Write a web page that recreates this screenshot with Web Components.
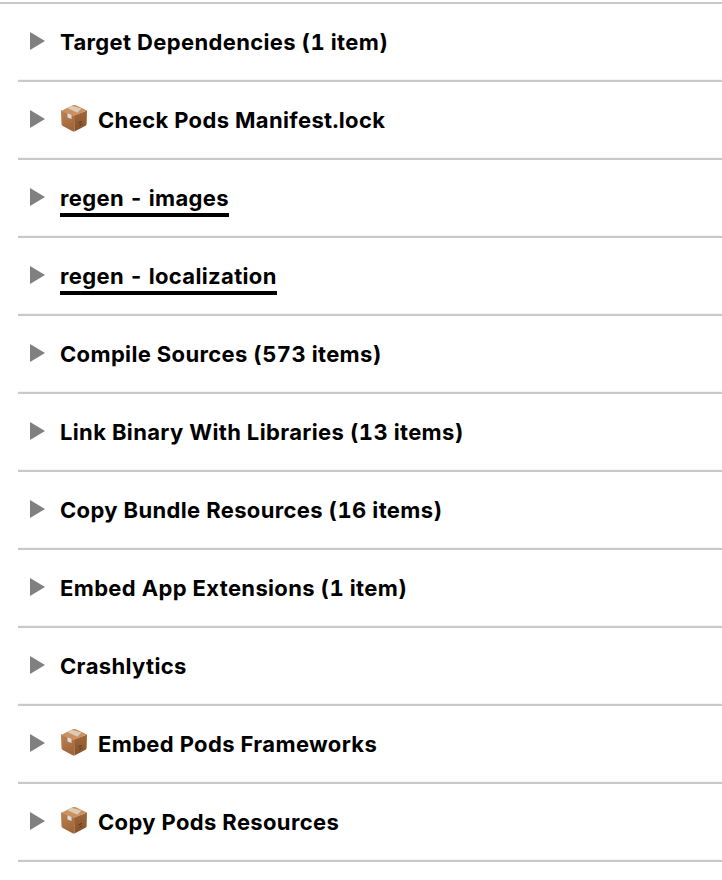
<!DOCTYPE html>
<html>
<head>
<meta charset="utf-8">
<title>Build Phases</title>
<style>
	html, body { margin: 0; padding: 0; background: #fff; }
	body { padding-top: 2px; font-family: Inter, "Liberation Sans", sans-serif; }
</style>
</head>
<body>
<phase-list>
	<build-phase>Target Dependencies (1 item)</build-phase>
	<build-phase pod>Check Pods Manifest.lock</build-phase>
	<build-phase marked>regen - images</build-phase>
	<build-phase marked>regen - localization</build-phase>
	<build-phase>Compile Sources (573 items)</build-phase>
	<build-phase>Link Binary With Libraries (13 items)</build-phase>
	<build-phase>Copy Bundle Resources (16 items)</build-phase>
	<build-phase>Embed App Extensions (1 item)</build-phase>
	<build-phase>Crashlytics</build-phase>
	<build-phase pod>Embed Pods Frameworks</build-phase>
	<build-phase pod>Copy Pods Resources</build-phase>
</phase-list>
<script>
(function() {
	let listTemplate = document.createElement("template");
	listTemplate.innerHTML = `
		<style>
		:host {
			display: block;
			border-top: 2px solid #c9c9c9;
			padding-left: 18px;
		}
		</style>
		<slot></slot>
	`;

	class PhaseList extends HTMLElement {
		constructor() {
			super();
			this.attachShadow({mode: "open"}).appendChild(listTemplate.content.cloneNode(true));
		}
	}

	let boxTemplate = document.createElement("template");
	boxTemplate.innerHTML = `
		<style>
		:host { display: block; width: 28px; height: 28px; }
		svg { display: block; }
		</style>
		<svg width="28" height="28" viewBox="0 0 28 28">
			<defs>
				<linearGradient id="left" x1="0" y1="0" x2="0.3" y2="1">
					<stop offset="0" stop-color="#bd8350"/>
					<stop offset="1" stop-color="#a0663a"/>
				</linearGradient>
				<linearGradient id="right" x1="0" y1="0" x2="0" y2="1">
					<stop offset="0" stop-color="#a2683a"/>
					<stop offset="1" stop-color="#84502a"/>
				</linearGradient>
			</defs>
			<path d="M1 7 Q0.800 6 1.600 6.600 L14 11.500 L14.500 27.500 Q13.500 27.700 12.500 27.200 L2.800 22 Q1.500 21.300 1.500 20 Z" fill="url(#left)"/>
			<path d="M14 11.500 L27 6.500 L26.600 20 Q26.500 21.200 25.500 21.800 L14.500 27.500 Z" fill="url(#right)"/>
			<path d="M1 7 L12.500 1.300 Q14 0.700 15.500 1 L27 6.500 L14 11.800 Z" fill="#c9915f"/>
			<path d="M7 4 L11.500 1.800 L21.500 4.600 L17.500 8.800 Z" fill="#dccab2"/>
			<path d="M7.500 9.300 L11.500 11 L11.500 15 L7.500 13.400 Z" fill="#dedede"/>
			<path d="M18.500 19 L22 17.500 M19.500 21.300 L21.500 20.400" stroke="#5c3618" stroke-width="1" fill="none"/>
		</svg>
	`;

	class PodBox extends HTMLElement {
		constructor() {
			super();
			this.attachShadow({mode: "open"}).appendChild(boxTemplate.content.cloneNode(true));
		}
	}

	let phaseTemplate = document.createElement("template");
	phaseTemplate.innerHTML = `
		<style>
		:host {
			display: block;
			border-bottom: 2px solid #c9c9c9;
		}
		.row {
			display: flex;
			align-items: center;
			box-sizing: border-box;
			height: 76px;
			padding-left: 12px;
			padding-top: 1px;
			border-bottom: 1px solid #f5f5f5;
			font: 700 22px Inter, "Liberation Sans", sans-serif;
			font-variant-numeric: tabular-nums;
			letter-spacing: 0.35px;
			word-spacing: -0.6px;
			color: #000;
		}
		:host([marked]) .row { word-spacing: -1.2px; }
		.arrow {
			flex: none;
			width: 0;
			height: 0;
			margin-top: -3px;
			margin-right: 15px;
			border-left: 15px solid #808080;
			border-top: 9px solid transparent;
			border-bottom: 9px solid transparent;
		}
		pod-box {
			margin-right: 10px;
			margin-top: -4px;
		}
		.label { position: relative; white-space: nowrap; }
		:host([marked]) .label::after {
			content: "";
			position: absolute;
			left: 0;
			right: 0;
			bottom: -6px;
			height: 4px;
			background: #000;
		}
		</style>
		<div class="row">
			<span class="arrow"></span>
			<span class="label"><slot></slot></span>
		</div>
	`;

	class BuildPhase extends HTMLElement {
		constructor() {
			super();
			this._shadowRoot = this.attachShadow({mode: "open"});
			this._shadowRoot.appendChild(phaseTemplate.content.cloneNode(true));
			if (this.hasAttribute("pod")) {
				let label = this._shadowRoot.querySelector(".label");
				label.parentNode.insertBefore(document.createElement("pod-box"), label);
			}
		}
	}

	customElements.define("pod-box", PodBox);
	customElements.define("phase-list", PhaseList);
	customElements.define("build-phase", BuildPhase);
})();
</script>
</body>
</html>
